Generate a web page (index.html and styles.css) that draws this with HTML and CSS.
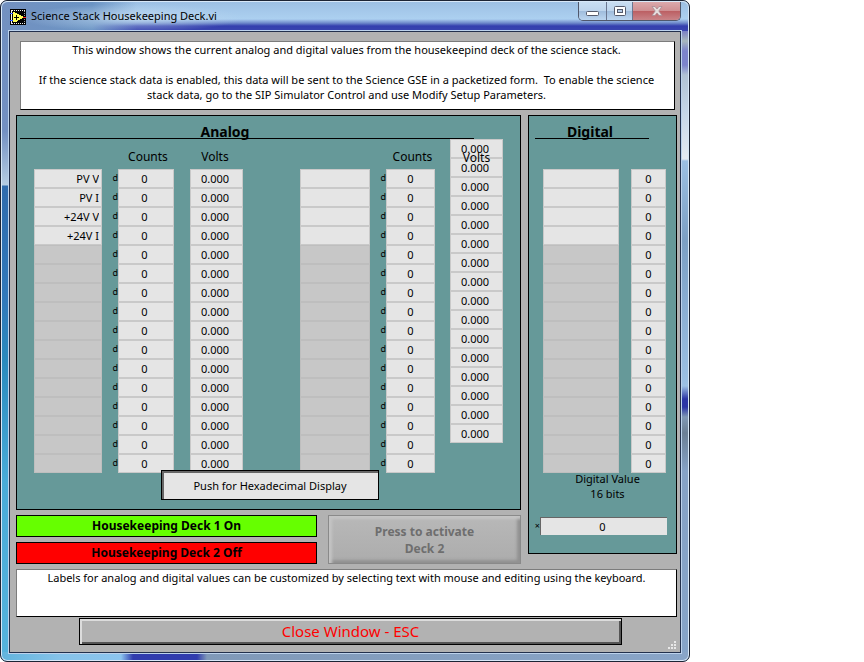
FILE: index.html
```
<!DOCTYPE html>
<html lang="en">
<head>
<meta charset="utf-8">
<title>Science Stack Housekeeping Deck.vi</title>
<link rel="stylesheet" href="styles.css">
</head>
<body>
<div class="window">
  <header class="titlebar">
    <svg class="app-icon" width="16" height="16" viewBox="0 0 16 16" shape-rendering="crispEdges" aria-hidden="true">
      <rect width="16" height="16" fill="#000"/>
      <path d="M2 1.500h13M2 14.500h13" stroke="#f4f4f4" stroke-dasharray="1 1"/>
      <path d="M1.500 1v14" stroke="#f4f4f4"/>
      <path d="M14.500 2v12" stroke="#999" stroke-dasharray="1 1"/>
      <path d="M3 3h2v1h2v1h2v1h2v1h2v1h1v1h-2v1h-2v1h-2v1H7v1H3z" fill="#ffff55"/>
      <path d="M6 6h1v2h2v1H7v2H6V9H4V8h2z" fill="#000"/>
      <path d="M0 4h3v1H0zM0 11h3v1H0z" fill="#3355ff"/>
      <path d="M13 8h3v1h-3z" fill="#f22"/>
    </svg>
    <h1 class="title">Science Stack Housekeeping Deck.vi</h1>
    <div class="caption-buttons">
      <button class="cap cap-min" type="button" aria-label="Minimize">
        <svg width="13" height="6" viewBox="0 0 13 6"><rect x=".5" y=".5" width="12" height="4" rx="1" fill="#fff" stroke="#555b6c"/></svg>
      </button>
      <button class="cap cap-max" type="button" aria-label="Maximize">
        <svg width="12" height="10" viewBox="0 0 12 10"><rect x=".5" y=".5" width="11" height="9" rx="1" fill="#fff" stroke="#555b6c"/><rect x="3.5" y="3.5" width="5" height="3" fill="#b5cbe6" stroke="#555b6c"/></svg>
      </button>
      <button class="cap cap-close" type="button" aria-label="Close">
        <svg width="12" height="10" viewBox="0 0 12 10"><path d="M1 .5h3l2 2.500 2-2.500h3L7.800 5 11 9.500H8L6 7 4 9.500H1L4.200 5z" fill="#e6dede" stroke="#a98a93" stroke-width=".8"/></svg>
      </button>
    </div>
  </header>

  <main class="client">
    <p class="note intro">This window shows the current analog and digital values from the housekeepind deck of the science stack.

If the science stack data is enabled, this data will be sent to the Science GSE in a packetized form.  To enable the science stack data, go to the SIP Simulator Control and use Modify Setup Parameters.</p>

    <div class="decks">
      <div class="left">
        <section class="panel analog">
          <h2 class="heading">Analog</h2>
          <div class="bank">
            <table class="readings bank-a" id="bank-a">
              <thead><tr><th></th><th></th><th class="counts">Counts</th><th class="volts">Volts</th></tr></thead>
              <tbody></tbody>
            </table>
            <table class="readings bank-b" id="bank-b">
              <thead><tr><th></th><th></th><th class="counts">Counts</th></tr></thead>
              <tbody></tbody>
            </table>
            <div class="volts-b">
              <span class="overlay-label">Volts</span>
              <table class="readings" id="volts-b"><tbody></tbody></table>
            </div>
          </div>
          <button class="hex" type="button">Push for Hexadecimal Display</button>
        </section>
        <div class="status-row">
          <div class="statuses">
            <div class="status on">Housekeeping Deck 1 On</div>
            <div class="status off">Housekeeping Deck 2 Off</div>
          </div>
          <button class="activate" type="button" disabled>Press to activate<br>Deck 2</button>
        </div>
      </div>

      <section class="panel digital">
        <h2 class="heading">Digital</h2>
        <table class="readings bank-d" id="bank-d"><tbody></tbody></table>
        <label class="word-label" for="word">Digital Value<br>16 bits</label>
        <div class="word"><span class="radix">×</span><input id="word" type="text" value="0" readonly></div>
      </section>
    </div>

    <p class="note hint">Labels for analog and digital values can be customized by selecting text with mouse and editing using the keyboard.</p>
    <button class="close" type="button">Close Window - ESC</button>
    <svg class="grip" width="9" height="9" viewBox="0 0 9 9" shape-rendering="crispEdges" aria-hidden="true">
      <path d="M6 0h2v2H6zM3 3h2v2H3zM6 3h2v2H6zM0 6h2v2H0zM3 6h2v2H3zM6 6h2v2H6z" fill="#e8e8e8"/>
    </svg>
  </main>
</div>
<script src="app.js"></script>
</body>
</html>
```
FILE: app.js
```
const CHANNELS = 16;
const EDITABLE = 4;

function labelCell(bank, i, names) {
  const enabled = i < EDITABLE;
  const value = names[i] || "";
  return `<td><input class="cell name" type="text" aria-label="${bank} ${i + 1} label" value="${value}"${enabled ? "" : " disabled"}></td>`;
}
const valueCell = (v) => `<td class="cell">${v}</td>`;
const radixCell = () => `<td class="radix">d</td>`;

function fill(id, row) {
  const rows = Array.from({ length: CHANNELS }, (_, i) => `<tr>${row(i)}</tr>`);
  document.querySelector(`#${id} tbody`).innerHTML = rows.join("");
}

const names = ["PV V", "PV I", "+24V V", "+24V I"];
fill("bank-a", (i) => labelCell("Analog A", i, names) + radixCell() + valueCell("0") + valueCell("0.000"));
fill("bank-b", (i) => labelCell("Analog B", i, []) + radixCell() + valueCell("0"));
fill("volts-b", () => valueCell("0.000"));
fill("bank-d", (i) => labelCell("Digital", i, []) + valueCell("0"));
```
FILE: styles.css
```
* { box-sizing: border-box; }

body {
  margin: 0;
  background: #fff;
  color: #000;
  font: 11px/15px "Noto Sans", "Open Sans", sans-serif;
}
button, input { font: inherit; color: inherit; }
h1, h2, p { margin: 0; }

.window {
  max-width: 690px;
  padding: 0 8px 8px;
  border: 1px solid #1c2434;
  border-radius: 7px;
  box-shadow: inset 0 0 0 1px #d8e8f8;
  background:
    linear-gradient(90deg, #62b4dd 0, #86c3ea 60px, #8cc4ee 120px, #303cae 132px, #303cae 196px, #8099b8 206px, #89a5c8 100%) bottom / 100% 9px no-repeat,
    linear-gradient(#6f8fc0 0, #7390c2 130px, #b5cce2 184px, #2f6bad 185px, #3179bb 300px, #2a8abd 360px, #4aabd8 480px, #56b3dd 100%) left / 9px 100% no-repeat,
    linear-gradient(#a9cbe9 0, #7a80c6 30px, #a8b8bd 40px, #7c84cc 50px, #7c84cc 64px, #b0c2d4 74px, #c5d6e8 110px, #e4eaf2 158px, #9cbfe2 160px, #7c9fc4 240px, #9cc0e4 385px, #2b35a5 398px, #2b35a5 406px, #8098b5 416px, #6b7f96 432px, #86a2c6 470px, #86a4c8 100%) right / 9px 100% no-repeat,
    #8fb4da;
}

.titlebar {
  display: flex;
  align-items: center;
  height: 30px;
  margin: 0 -7px;
  padding: 0 7px 0 8px;
  border-top: 1px solid #d8e8f8;
  border-radius: 6px 6px 0 0;
  background:
    radial-gradient(closest-side, rgba(190, 215, 238, .8), rgba(190, 215, 238, 0)) 20px 2px / 220px 28px no-repeat,
    linear-gradient(90deg, #7391c0 0, #6b94c4 90px, rgba(107, 148, 196, 0) 135px),
    linear-gradient(#9dc0e4 0, #acd0f0 17px, #6f8acb 21px, #343fae 24px, #3a45b0 100%);
}
.app-icon { flex: none; }
.title { margin-left: 5px; padding-bottom: 2px; font-size: 11px; font-weight: 400; }

.caption-buttons {
  display: flex;
  align-self: flex-start;
  margin-left: auto;
  border: 1px solid #50586c;
  border-top: 0;
  border-radius: 0 0 5px 5px;
  overflow: hidden;
}
.cap {
  display: flex;
  align-items: center;
  justify-content: center;
  width: 26px;
  height: 18px;
  padding: 0;
  border: 0;
  border-right: 1px solid #6a7690;
  background: linear-gradient(#c9def2 0, #bdd4ec 50%, #9fbcdc 51%, #bcd6f0 100%);
}
.cap-min { width: 28px; padding-top: 6px; }
.cap-close {
  width: 47px;
  border-right: 0;
  background: linear-gradient(#dba9ac 0, #cf8f92 50%, #bc5f63 51%, #c98488 100%);
}

.client {
  position: relative;
  padding: 9px 3px 7px 6px;
  border: 1px solid #22304c;
  background: #b2b2b2;
  box-shadow: 0 0 0 1px #bcd2ec;
}

.note {
  border: 1px solid;
  border-color: #7c7c7c #000 #000 #7c7c7c;
  background: #fff;
  text-align: center;
}
.intro {
  min-height: 69px;
  margin: 0 2px 5px 4px;
  padding: 0 10px 0 8px;
  white-space: pre-wrap;
}
.hint { min-height: 48px; margin-top: 5px; }

.decks { display: flex; align-items: flex-start; gap: 7px; }
.left { flex: 1; min-width: 0; }

.panel { border: 1px solid #000; background: #669999; }
.heading {
  height: 23px;
  padding-top: 7px;
  border-bottom: 1px solid #000;
  font-size: 14px;
  line-height: 18px;
  text-align: center;
}
.analog { padding-bottom: 9px; }
.analog .heading { margin: 0 46px 0 3px; padding-right: 44px; }

.bank { display: flex; padding: 0 17px; }

.readings, .readings thead, .readings tbody { display: block; }
.readings tr { display: grid; }
.readings td, .readings th { display: block; padding: 0; font-weight: 400; }
.readings thead tr { height: 30px; padding-top: 10px; }
.readings thead, .overlay-label { font-size: 12px; }
.readings .counts { padding-left: 4px; }
.readings .volts { padding-right: 3px; }
.bank-a tr { grid-template-columns: 68px 16px 56px 53px; }
.bank-a tr > :last-child { margin-left: 16px; margin-right: -16px; }
.bank-a { margin-right: 73px; }
.bank-b tr { grid-template-columns: 70px 16px 49px; }
.bank-d tr { grid-template-columns: 76px 35px; column-gap: 12px; }

.cell, .readings td.cell {
  display: block;
  width: auto;
  height: 19px;
  border: 1px solid #c9c9c9;
  background: #e5e5e5;
  line-height: 17px;
  text-align: center;
}
.bank-a td.cell, .volts-b td.cell { padding-right: 3px; }
.cell.name { width: 100%; padding: 0 2px; text-align: right; }
.cell.name:disabled { border-color: #bebebe; background: #c7c7c7; }
.radix { font-size: 9px; line-height: 18px; text-align: right; }

.volts-b { position: relative; width: 53px; margin-left: 15px; }
.overlay-label { position: absolute; top: 11px; left: 0; width: 100%; text-align: center; }

.hex {
  position: relative;
  display: block;
  width: 218px;
  height: 30px;
  margin: -3px 0 0 144px;
  border: 1px solid #000;
  background: #e5e5e5;
  box-shadow: inset 2px 2px #666;
}

.status-row { display: flex; gap: 11px; margin-top: 5px; }
.statuses { display: grid; flex: 1; gap: 5px; }
.status {
  height: 22px;
  border: 1px solid #000;
  font-size: 12px;
  font-weight: 700;
  line-height: 20px;
  text-align: center;
}
.on { background: #66ff00; }
.off { background: #ff0000; }
.activate {
  width: 193px;
  height: 49px;
  border: 1px solid #8a8a8a;
  background: linear-gradient(#b8b8b8, #acacac);
  box-shadow: inset 3px 3px 3px #c4c4c4, inset -3px -3px 3px #919191;
  color: #6e6e6e;
  font-size: 12px;
  font-weight: 700;
  line-height: 17px;
}

.digital { width: 149px; padding-bottom: 18px; }
.digital .heading { margin: 0 27px 30px 6px; padding-right: 4px; }
.bank-d { margin-left: 14px; }
.word-label { display: block; margin: -2px 0 16px 10px; text-align: center; }
.word { display: flex; margin: 0 9px 0 5px; }
.word .radix { width: 6px; }
.word input {
  flex: 1;
  min-width: 0;
  height: 18px;
  padding: 0 3px 0 0;
  border: 0;
  border-top: 1px solid #666;
  border-left: 1px solid #666;
  background: #e5e5e5;
  text-align: center;
}

.close {
  display: block;
  width: 543px;
  max-width: 100%;
  height: 27px;
  margin: 1px 0 0 63px;
  padding: 0;
  border: 1px solid #000;
  background: #b2b2b2;
  box-shadow: inset 2px 2px #dcdcdc, inset -2px -2px #555;
  color: #ff0000;
  font-size: 15px;
}
.grip { position: absolute; right: 3px; bottom: 2px; }
```
